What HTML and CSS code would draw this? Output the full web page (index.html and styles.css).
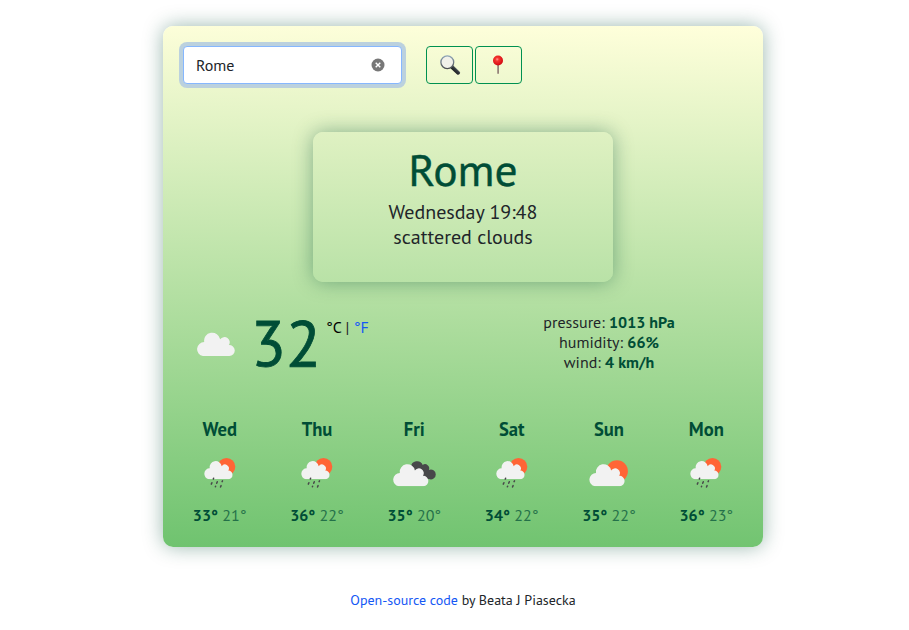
FILE: index.html
```html
<!DOCTYPE html>
<html lang="en">
<head>
<meta charset="utf-8">
<title>Weather</title>
<link rel="stylesheet" href="styles.css">
</head>
<body>
<svg class="defs" aria-hidden="true">
  <defs>
    <linearGradient id="handle" x1="0" y1="1" x2="1" y2="0"><stop offset="0" stop-color="#111"/><stop offset=".55" stop-color="#30363a"/><stop offset="1" stop-color="#8b9697"/></linearGradient>
    <radialGradient id="ball" cx=".42" cy=".38" r=".6"><stop offset="0" stop-color="#ff9a92"/><stop offset=".3" stop-color="#f5342f"/><stop offset="1" stop-color="#d30b12"/></radialGradient>
    <linearGradient id="rim" x1="0" y1="0" x2="0" y2="1"><stop offset="0" stop-color="#8fa5b8"/><stop offset="1" stop-color="#4c4e50"/></linearGradient>
    <symbol id="cloud" viewBox="0 0 38 24" preserveAspectRatio="none"><path fill="#f2f2f2" d="M6.800 24A6.900 7 0 0 1 8 10.100A7.900 8 0 0 1 23.600 7.300A5 5 0 0 1 32 13A5.500 5.500 0 0 1 32.500 24Z"/></symbol>
    <symbol id="rain" viewBox="0 0 50 50">
      <circle cx="31.500" cy="16.800" r="8.800" fill="#ff6536"/>
      <use href="#cloud" x="8.500" y="10.500" width="29.300" height="18.700"/>
      <g stroke="#48484a" stroke-width="1.500" stroke-linecap="round"><path d="M18.600 28.200l-.3.900M16.900 32.700l-.6 1.400M22.300 31.700l-.6 1.500M27.500 30.900l-.4.700M20.600 36.300l-.2.500M26.100 35.600l-.6 1.400"/></g>
    </symbol>
    <symbol id="sun" viewBox="0 0 50 50">
      <circle cx="33" cy="21.200" r="10.900" fill="#ff6536"/>
      <use href="#cloud" x="4.400" y="13.500" width="36.500" height="22.700"/>
    </symbol>
    <symbol id="broken" viewBox="0 0 50 50">
      <path fill="#48484a" d="M22 17A6.100 6.100 0 0 1 33.700 14.900A4.200 4.200 0 0 1 39.900 20A4.900 4.900 0 1 1 40 29H34Z"/>
      <use href="#cloud" x="3.200" y="13.500" width="36.500" height="22.700"/>
    </symbol>
  </defs>
</svg>
<div class="page">
  <main class="card">
    <form class="search">
      <div class="field"><span class="query">Rome</span>
        <svg class="clear" viewBox="0 0 14 14"><circle cx="7" cy="7" r="6.500" fill="#777"/><path d="M4.700 4.700l4.600 4.600M9.300 4.700l-4.600 4.600" stroke="#fff" stroke-width="1.400"/></svg>
      </div>
      <button class="btn" type="button"><svg viewBox="0 0 22 22"><path d="M13 13l6.200 5.800" stroke="url(#handle)" stroke-width="3.800" stroke-linecap="round"/><circle cx="8.300" cy="8.300" r="6.400" fill="#f1f1e9" stroke="url(#rim)" stroke-width="1.300"/></svg></button>
      <button class="btn" type="button"><svg viewBox="0 0 22 22"><path d="M10.100 10v9.800" stroke="#8b7771" stroke-width="1.600"/><circle cx="10" cy="6.500" r="5" fill="url(#ball)"/></svg></button>
    </form>
    <section class="place">
      <h1>Rome</h1>
      <p>Wednesday 19:48</p>
      <p>scattered clouds</p>
    </section>
    <section class="current">
      <svg class="now-icon"><use href="#cloud"/></svg>
      <strong class="temp">32</strong>
      <span class="units"><b>°C</b> | <a>°F</a></span>
      <ul class="details">
        <li>pressure: <b>1013 hPa</b></li>
        <li>humidity: <b>66%</b></li>
        <li>wind: <b>4 km/h</b></li>
      </ul>
    </section>
    <section class="forecast">
      <div><h2>Wed</h2><svg><use href="#rain"/></svg><p><b>33°</b> <span>21°</span></p></div>
      <div><h2>Thu</h2><svg><use href="#rain"/></svg><p><b>36°</b> <span>22°</span></p></div>
      <div><h2>Fri</h2><svg><use href="#broken"/></svg><p><b>35°</b> <span>20°</span></p></div>
      <div><h2>Sat</h2><svg><use href="#rain"/></svg><p><b>34°</b> <span>22°</span></p></div>
      <div><h2>Sun</h2><svg><use href="#sun"/></svg><p><b>35°</b> <span>22°</span></p></div>
      <div><h2>Mon</h2><svg><use href="#rain"/></svg><p><b>36°</b> <span>23°</span></p></div>
    </section>
  </main>
  <footer><a>Open-source code</a> by Beata J Piasecka</footer>
</div>
</body>
</html>
```
FILE: styles.css
```css
* { box-sizing: border-box; margin: 0; padding: 0; }
body { background: #fff; color: #212529; font-family: "PT Sans", "Noto Sans", sans-serif; overflow: hidden; }
.defs { position: absolute; width: 0; height: 0; }
.page { width: 600px; margin: 26px 0 0 163px; }
.card { height: 521px; border-radius: 10px; padding: 20px 8px 0; background: linear-gradient(181deg, #ffffdb, #6fc36f); box-shadow: 0 0 20px rgba(0, 77, 54, .4); }
.search { display: flex; height: 38px; padding-left: 12px; }
.field { display: flex; align-items: center; width: 219px; height: 38px; margin-right: 24px; padding: 0 16px 0 12px; border: 1px solid #86b7fe; border-radius: 4px; background: #fff; box-shadow: 0 0 0 4px #bbd1de; }
.query { font-size: 16px; flex: 1; }
.clear { width: 14px; height: 14px; margin-top: -1px; }
.btn { width: 47px; height: 38px; margin-right: 2px; border: 1px solid #009150; border-radius: 4px; background: transparent; }
.btn svg { display: block; width: 22px; height: 22px; margin: 0 auto; }
.place { width: 300px; height: 150px; margin: 48px auto 0; padding-top: 10px; border-radius: 10px; text-align: center; background: linear-gradient(#dff1c2, #b9e2a7); box-shadow: 0 0 20px rgba(0, 77, 54, .4); }
h1 { margin-bottom: 2px; color: #004d36; font-size: 45.600px; line-height: 56px; font-weight: 400; -webkit-text-stroke: .4px; }
.place p { font-size: 20px; line-height: 25px; }
.current { display: flex; height: 80px; margin-top: 30px; }
.now-icon { width: 39px; height: 24px; margin: 20px 0 0 25px; }
.temp { width: 70px; margin-left: 16px; color: #004d36; font-size: 64px; font-weight: 400; line-height: 62px; -webkit-text-stroke: .8px; }
.units { width: 60px; margin-left: 5px; font-size: 16px; line-height: 30px; white-space: nowrap; }
.units b { color: #000; font-weight: 400; }
a { color: #1558f5; }
.details { width: 200px; margin-left: 123px; list-style: none; text-align: center; font-size: 16px; line-height: 20px; }
.details b { color: #004d36; }
.forecast { display: grid; grid-template-columns: repeat(6, 1fr); margin-top: 25px; text-align: center; color: #004d36; }
h2 { font-size: 18.600px; line-height: 25px; }
.forecast svg { display: block; width: 50px; height: 50px; margin: 8px auto 3px; }
.forecast p { font-size: 16px; line-height: 24px; }
.forecast span { opacity: .7; }
footer { margin-top: 43px; text-align: center; font-size: 14px; line-height: 20px; }
```
